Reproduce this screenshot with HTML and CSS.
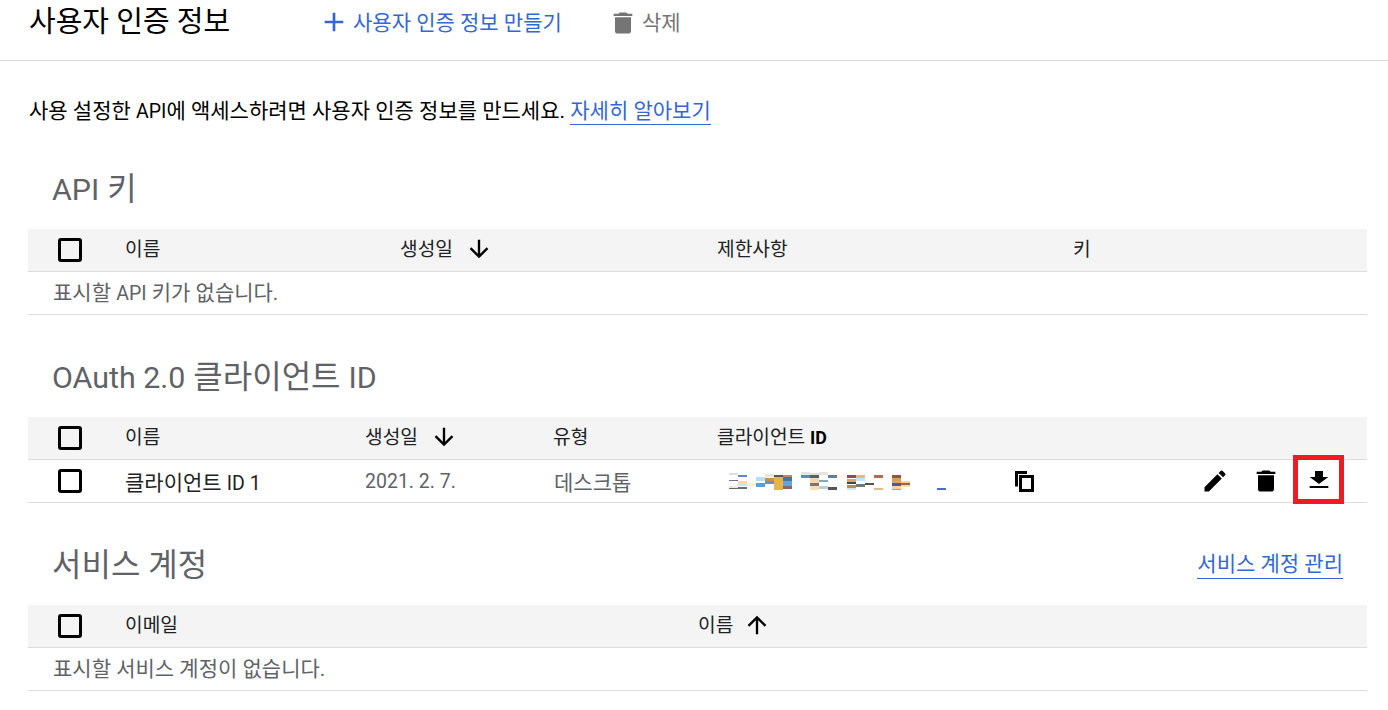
FILE: index.html
```html
<!DOCTYPE html>
<html lang="ko">
<head>
<meta charset="utf-8">
<title>사용자 인증 정보</title>
<link rel="stylesheet" href="styles.css">
</head>
<body>
<header class="topbar">
  <h1 class="page-title">사용자 인증 정보</h1>
  <a class="tool tool-create"><svg class="tool-icon" viewBox="0 0 24 24"><path d="M19 13h-6v6h-2v-6H5v-2h6V5h2v6h6z"/></svg><span class="tool-label">사용자 인증 정보 만들기</span></a>
  <a class="tool tool-delete"><svg class="tool-icon trash-small" viewBox="0 0 24 24" preserveAspectRatio="none"><path d="M6 19c0 1.100.9 2 2 2h8c1.100 0 2-.9 2-2V7H6zM19 4h-3.500l-1-1h-5l-1 1H5v2h14z"/></svg><span class="tool-label">삭제</span></a>
</header>
<main class="content">
  <p class="intro">사용 설정한 <span class="lat">API</span>에 액세스하려면 사용자 인증 정보를 만드세요. <a class="link">자세히 알아보기</a></p>

  <div class="section-head first"><h2><span class="lat">API</span> 키</h2></div>
  <div class="row head cols-api">
    <span class="check"></span><span>이름</span>
    <span class="sort">생성일<svg class="arrow arrow-down" viewBox="0 0 24 24"><path d="M20 12l-1.410-1.410L13 16.170V4h-2v12.170l-5.580-5.590L4 12l8 8z"/></svg></span>
    <span>제한사항</span><span>키</span>
  </div>
  <div class="row empty"><span>표시할 <span class="lat">API</span> 키가 없습니다.</span></div>

  <div class="section-head"><h2><span class="lat">OAuth 2.0</span> 클라이언트 <span class="lat">ID</span></h2></div>
  <div class="row head cols-oauth">
    <span class="check"></span><span>이름</span>
    <span class="sort">생성일<svg class="arrow arrow-down" viewBox="0 0 24 24"><path d="M20 12l-1.410-1.410L13 16.170V4h-2v12.170l-5.580-5.590L4 12l8 8z"/></svg></span>
    <span>유형</span><span>클라이언트 <b class="bold-id">ID</b></span>
  </div>
  <div class="row body-row">
    <span class="check"></span><span class="strong">클라이언트 <span class="lat">ID 1</span></span>
    <span class="muted date">2021. 2. 7.</span><span class="muted">데스크톱</span>
    <span class="client-cell">
      <svg class="blur" viewBox="0 0 220 18" shape-rendering="crispEdges">
        <rect x="0" y="1" width="9" height="2" fill="#dcdcec"/><rect x="0" y="8" width="9" height="1" fill="#77707f"/><rect x="0" y="14" width="9" height="2" fill="#efe8d8"/><rect x="0" y="16" width="9" height="1" fill="#666"/>
        <rect x="9" y="3" width="9" height="2" fill="#5b8cc8"/><rect x="9" y="9" width="9" height="3" fill="#fdd9ae"/><rect x="9" y="12" width="9" height="2" fill="#bfeaf8"/><rect x="9" y="15" width="9" height="2" fill="#66707c"/>
        <rect x="18" y="11" width="9" height="3" fill="#fff0cc"/>
        <rect x="27" y="5" width="9" height="4" fill="#b3e0fd"/><rect x="27" y="11" width="9" height="4" fill="#58a0dc"/>
        <rect x="36" y="2" width="9" height="3" fill="#e6e6e0"/><rect x="36" y="6" width="9" height="3" fill="#c88e50"/><rect x="36" y="9" width="9" height="3" fill="#6a90c0"/>
        <rect x="45" y="3" width="9" height="2" fill="#555"/><rect x="45" y="5" width="9" height="13" fill="#e0b650"/>
        <rect x="54" y="3" width="9" height="2" fill="#c08860"/><rect x="54" y="5" width="9" height="4" fill="#50709c"/><rect x="54" y="9" width="9" height="5" fill="#62a4e0"/><rect x="54" y="14" width="9" height="3" fill="#9c6058"/>
        <rect x="72" y="0" width="9" height="3" fill="#e4e4ec"/><rect x="72" y="3" width="9" height="3" fill="#5e86bc"/>
        <rect x="81" y="1" width="9" height="2" fill="#ddd"/><rect x="81" y="3" width="9" height="3" fill="#55606c"/><rect x="81" y="6" width="9" height="5" fill="#fbd4a8"/><rect x="81" y="11" width="9" height="3" fill="#777"/><rect x="81" y="14" width="9" height="4" fill="#fddcb4"/>
        <rect x="90" y="0" width="9" height="3" fill="#e8e4d8"/><rect x="90" y="8" width="9" height="2" fill="#88a8b8"/><rect x="90" y="14" width="9" height="3" fill="#b8d0dc"/>
        <rect x="99" y="3" width="9" height="3" fill="#5880b8"/><rect x="99" y="15" width="9" height="3" fill="#555"/>
        <rect x="118" y="3" width="9" height="3" fill="#8c4c50"/><rect x="118" y="7" width="9" height="3" fill="#d8a868"/><rect x="118" y="10" width="9" height="2" fill="#444"/><rect x="118" y="13" width="9" height="3" fill="#c0884c"/><rect x="118" y="16" width="9" height="2" fill="#c8e8fc"/>
        <rect x="127" y="3" width="9" height="3" fill="#e8b880"/><rect x="127" y="6" width="9" height="3" fill="#c0e8fc"/><rect x="127" y="12" width="9" height="3" fill="#777"/>
        <rect x="136" y="11" width="9" height="2" fill="#555"/>
        <rect x="145" y="3" width="9" height="3" fill="#b86850"/><rect x="145" y="16" width="9" height="2" fill="#e8b888"/>
        <rect x="163" y="3" width="9" height="3" fill="#8c5840"/><rect x="163" y="6" width="9" height="3" fill="#d8a058"/><rect x="163" y="9" width="9" height="2" fill="#d0a868"/><rect x="163" y="11" width="9" height="3" fill="#4c5c90"/><rect x="163" y="14" width="9" height="3" fill="#fbd4a0"/><rect x="163" y="17" width="9" height="1" fill="#78b0dc"/>
        <rect x="172" y="9" width="9" height="2" fill="#fbd090"/><rect x="172" y="11" width="9" height="2" fill="#8c6a50"/><rect x="172" y="13" width="9" height="2" fill="#fbdcb0"/>
        <rect x="208" y="16" width="9" height="3" fill="#4c70bc"/>
      </svg>
      <svg class="copy" viewBox="0 0 19 21"><path d="M12 1.500H1.500V15.500" fill="none" stroke="#000" stroke-width="3"/><rect x="5.500" y="5.500" width="12" height="14" fill="none" stroke="#000" stroke-width="3"/></svg>
    </span>
    <span class="actions">
      <svg class="icon pencil" viewBox="0 0 24 24"><path d="M3 17.250V21h3.750L17.810 9.940l-3.750-3.750zM20.710 7.040a1 1 0 0 0 0-1.410l-2.340-2.340a1 1 0 0 0-1.410 0l-1.830 1.830 3.750 3.750z"/></svg>
      <svg class="icon trash" viewBox="0 0 24 24" preserveAspectRatio="none"><path d="M6 19c0 1.100.9 2 2 2h8c1.100 0 2-.9 2-2V7H6zM19 4h-3.500l-1-1h-5l-1 1H5v2h14z"/></svg>
      <span class="download-box"><svg class="icon download" viewBox="0 0 24 24" preserveAspectRatio="none"><path d="M19 9h-4V3H9v6H5l7 7zM5 18v2h14v-2z"/></svg></span>
    </span>
  </div>

  <div class="section-head"><h2>서비스 계정</h2><a class="link manage">서비스 계정 관리</a></div>
  <div class="row head cols-svc">
    <span class="check"></span><span>이메일</span>
    <span class="sort">이름<svg class="arrow" viewBox="0 0 24 24"><path d="M4 12l1.410 1.410L11 7.830V20h2V7.830l5.580 5.590L20 12l-8-8z"/></svg></span>
  </div>
  <div class="row empty"><span>표시할 서비스 계정이 없습니다.</span></div>
</main>
</body>
</html>
```

FILE: styles.css
```css
* { box-sizing: border-box; }
html, body { margin: 0; padding: 0; }
body {
  width: 1388px;
  height: 710px;
  overflow: hidden;
  background: #fff;
  color: #000;
  font-family: Roboto, "Noto Sans CJK KR", sans-serif;
  font-size: 21px;
}
.lat { font-size: 0.93em; }
h2 .lat { font-size: 0.95em; }
.topbar {
  display: flex;
  align-items: center;
  height: 61px;
  padding: 0 0 16px 29px;
  border-bottom: 1px solid #dadce0;
}
.page-title {
  margin: 0;
  width: 289px;
  font-size: 29px;
  font-weight: 400;
  line-height: 44px;
}
.tool {
  display: flex;
  align-items: center;
  font-size: 21px;
}
.tool-label { margin-top: -2px; }
.tool-icon { width: 32px; height: 32px; margin-right: 3px; fill: currentColor; flex: none; }
.trash-small { height: 28px; margin-top: 2px; margin-right: 3px; }
.tool-create { color: #3367d6; width: 289px; }
.tool-delete { color: #757575; }
.intro {
  margin: 0;
  padding: 37px 0 0 29px;
  height: 68px;
  line-height: 26px;
  font-size: 21px;
}
.link {
  color: #3367d6;
  border-bottom: 1px solid #3367d6;
  padding-bottom: 1px;
}
.content { padding-right: 21px; }
.section-head {
  display: flex;
  align-items: center;
  justify-content: space-between;
  margin-left: 28px;
  padding: 16px 24px 0;
  height: 102px;
}
.section-head.first { height: 100px; padding-top: 13px; }
.section-head h2 {
  margin: 0;
  font-size: 32px;
  font-weight: 400;
  color: #5f6368;
}
.manage { font-size: 21px; margin-top: 2px; }
.row {
  display: grid;
  align-items: center;
  margin-left: 28px;
  height: 43px;
  border-bottom: 1px solid #dcdcdc;
  font-size: 21px;
  color: #333;
}
.head { background: #f4f4f4; font-size: 19.200px; padding-bottom: 4px; color: #202124; }
.cols-api { grid-template-columns: 97px 275px 317px 356px 1fr; }
.cols-oauth { grid-template-columns: 97px 240px 188px 164px 1fr; }
.cols-svc { grid-template-columns: 97px 573px 1fr; }
.bold-id { font-weight: 700; font-size: 0.93em; color: #000; }
.check {
  justify-self: start;
  margin-left: 30px;
  width: 24px;
  height: 24px;
  border: 3px solid #000;
  border-radius: 3px;
}
.head .check { margin-top: 4px; }
.sort { display: flex; align-items: center; gap: 10px; }
.arrow { width: 28px; height: 28px; fill: #000; margin-top: 2px; }
.arrow-down { margin-left: 2px; }
.empty { display: flex; padding: 0 0 4px 25px; color: #5f6368; }
.body-row {
  grid-template-columns: 97px 240px 189px 175px 310px 1fr;
  grid-template-rows: 42px;
}
.strong { color: #222; }
.muted { color: #5f6368; }
.date { font-size: 19.500px; }
.client-cell { display: flex; align-items: center; }
.blur { width: 220px; height: 18px; flex: none; margin-right: 66px; }
.copy { width: 19px; height: 21px; flex: none; }
.icon { fill: #000; flex: none; }
.pencil { width: 28px; height: 28px; }
.trash { width: 32px; height: 28px; }
.download { width: 32px; height: 24px; }
.actions {
  justify-self: end;
  display: flex;
  align-items: center;
  gap: 21px;
  margin-right: 23px;
}
.download-box {
  display: flex;
  align-items: center;
  justify-content: center;
  width: 51px;
  height: 49px;
  margin: -3px 0 0 -10px;
  border: 5px solid #ed1c24;
}
```
